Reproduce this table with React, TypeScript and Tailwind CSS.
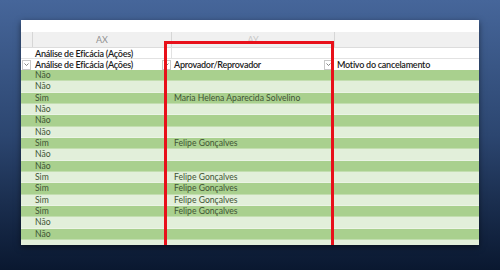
import React from "react";

const rows: { a: string; b?: string }[] = [
  { a: "Não" },
  { a: "Não" },
  { a: "Sim", b: "Maria Helena Aparecida Solvelino" },
  { a: "Não" },
  { a: "Não" },
  { a: "Não" },
  { a: "Sim", b: "Felipe Gonçalves" },
  { a: "Não" },
  { a: "Não" },
  { a: "Sim", b: "Felipe Gonçalves" },
  { a: "Sim", b: "Felipe Gonçalves" },
  { a: "Sim", b: "Felipe Gonçalves" },
  { a: "Sim", b: "Felipe Gonçalves" },
  { a: "Não" },
  { a: "Não" },
  { a: "" },
];

function FilterBtn() {
  return (
    <div className="w-[9px] h-[10px] bg-white border border-[#c8c8c8] flex items-center justify-center">
      <svg width="5" height="3" viewBox="0 0 5 3">
        <path d="M0.5 0.5 L2.5 2.5 L4.5 0.5" fill="none" stroke="#666" strokeWidth="0.8" />
      </svg>
    </div>
  );
}

export default function App() {
  return (
    <div className="w-[500px] h-[270px] bg-gradient-to-b from-[#46669a] via-[#2c4670] to-[#0a1830] pt-[20px] pl-[21px] overflow-hidden">
      <div
        className="relative w-[458px] h-[225px] bg-white overflow-hidden shadow-[0_2px_6px_rgba(0,0,0,0.5)] text-[9px] leading-none"
        style={{ fontFamily: "Lato, 'Liberation Sans', sans-serif" }}
      >
        <div className="h-[12px]" />
        {/* column letters */}
        <div className="flex h-[16px] bg-[#f0f0f0] border-b border-[#dcdcdc] text-[#909090]">
          <div className="w-[12px] border-r border-[#d6d6d6]" />
          <div className="w-[139px] border-r border-[#d6d6d6] flex items-center justify-center">AX</div>
          <div className="w-[163px] border-r border-[#d6d6d6] flex items-center justify-center text-[#c8c8c8]">AY</div>
          <div className="flex-1" />
        </div>
        {/* title row */}
        <div className="flex h-[11px] border-b border-[#e2e2e2] text-[#1a1a1a] font-semibold tracking-[-0.25px]">
          <div className="w-[12px]" />
          <div className="w-[139px] pl-[2px] flex items-center border-r border-[#e2e2e2]">Análise de Eficácia (Ações)</div>
          <div className="w-[163px]" />
          <div className="flex-1" />
        </div>
        {/* header row */}
        <div className="flex h-[11px] text-[#1a1a1a] font-semibold tracking-[-0.25px]">
          <div className="w-[12px] flex items-center pl-[1px]">
            <FilterBtn />
          </div>
          <div className="w-[139px] pl-[2px] pr-[1px] flex items-center justify-between">
            <span>Análise de Eficácia (Ações)</span>
            <FilterBtn />
          </div>
          <div className="w-[163px] pl-[2px] pr-[2px] flex items-center justify-between">
            <span>Aprovador/Reprovador</span>
            <FilterBtn />
          </div>
          <div className="flex-1 pl-[2px] flex items-center">Motivo do cancelamento</div>
        </div>
        {/* data */}
        {rows.map((r, i) => (
          <div
            key={i}
            className={
              "flex h-[11.35px] items-center text-[8.6px] text-[#3f5434] border-b border-white/30 " +
              (i % 2 === 0 ? "bg-[#a9d08e]" : "bg-[#e2efda]")
            }
          >
            <div className="w-[12px]" />
            <div className="w-[139px] pl-[2px]">{r.a}</div>
            <div className="w-[163px] pl-[2px]">{r.b}</div>
            <div className="flex-1" />
          </div>
        ))}
        {/* highlight box */}
        <div className="absolute left-[143px] top-[21px] w-[170px] h-[240px] border-[3px] border-[#e8101a]" />
      </div>
    </div>
  );
}
